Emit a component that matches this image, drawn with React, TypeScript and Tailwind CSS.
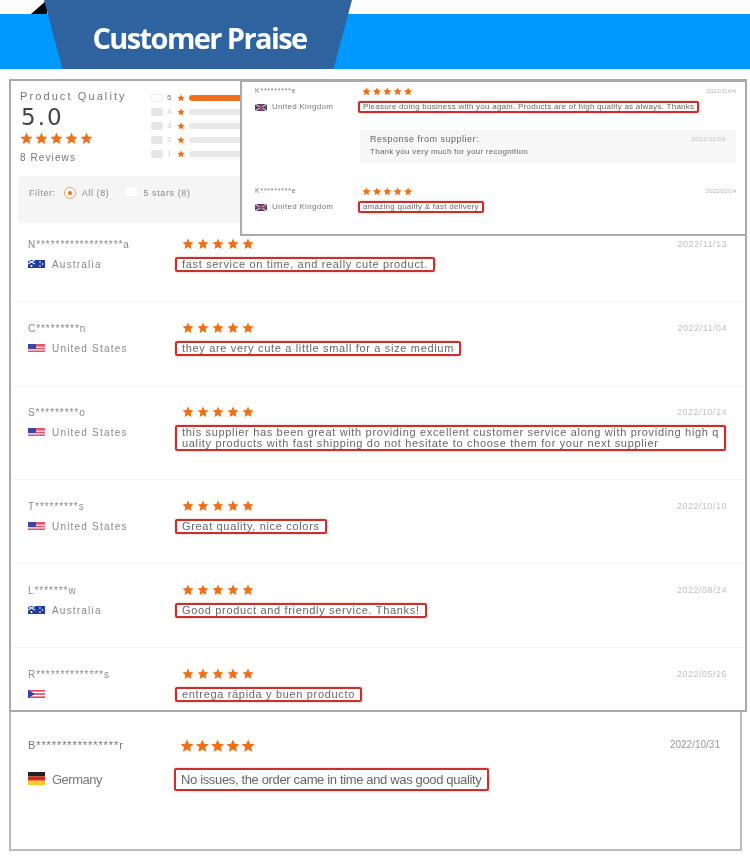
const reviews = [
  { name: 'N******************a', country: 'Australia', flag: 'au', date: '2022/11/13', text: 'fast service on time, and really cute product.', h: 'mb-[20px] h-[64px]' },
  { name: 'C*********n', country: 'United States', flag: 'us', date: '2022/11/04', text: 'they are very cute a little small for a size medium', h: 'mb-[20px] h-[64px]' },
  { name: 'S*********o', country: 'United States', flag: 'us', date: '2022/10/24', text: 'this supplier has been great with providing excellent customer service along with providing high q\nuality products with fast shipping do not hesitate to choose them for your next supplier', h: 'mb-[20px] h-[74px]' },
  { name: 'T*********s', country: 'United States', flag: 'us', date: '2022/10/10', text: 'Great quality, nice colors', h: 'mb-[20px] h-[64px]' },
  { name: 'L*******w', country: 'Australia', flag: 'au', date: '2022/08/24', text: 'Good product and friendly service. Thanks!', h: 'mb-[20px] h-[64px]' },
  { name: 'R**************s', country: '', flag: 'pr', date: '2022/05/26', text: 'entrega rápida y buen producto', h: 'h-[44px]' },
];

const bars = [
  { n: 5, fill: true },
  { n: 4, fill: false },
  { n: 3, fill: false },
  { n: 2, fill: false },
  { n: 1, fill: false },
];

function Stars({ size, pitch, count = 5 }: { size: number; pitch: number; count?: number }) {
  const stars = Array.from({ length: count }, (_, i) => i);
  return (
    <svg width={pitch * count} height={size} viewBox={`0 0 ${(pitch * count * 24) / size} 24`} className="block shrink-0">
      {stars.map((i) => (
        <path
          key={i}
          transform={`translate(${(i * pitch * 24) / size} 0)`}
          fill="#ef7018"
          d="M12 1l3.2 7.2 7.8.8-5.8 5.2 1.7 7.8L12 18l-6.9 4 1.7-7.8L1 9l7.8-.8z"
        />
      ))}
    </svg>
  );
}

function Flag({ kind, className }: { kind: string; className: string }) {
  if (kind === 'de') {
    return (
      <svg viewBox="0 0 17 13" className={className}>
        <rect width="17" height="4.4" fill="#222" />
        <rect y="4.4" width="17" height="4.3" fill="#d8261c" />
        <rect y="8.7" width="17" height="4.3" fill="#fbc926" />
      </svg>
    );
  }
  if (kind === 'au') {
    return (
      <svg viewBox="0 0 17 8" className={className}>
        <rect width="17" height="8" fill="#1f3f9c" />
        <path d="M0 0l7 4M7 0L0 4" stroke="#e8e8f0" strokeWidth="1.2" />
        <circle cx="3.5" cy="6" r="1" fill="#fff" />
        <circle cx="12" cy="2" r=".8" fill="#fff" />
        <circle cx="14.5" cy="4" r=".8" fill="#fff" />
        <circle cx="12" cy="6" r=".8" fill="#fff" />
      </svg>
    );
  }
  if (kind === 'uk') {
    return (
      <svg viewBox="0 0 12 7" className={className}>
        <rect width="12" height="7" fill="#3b3f78" />
        <path d="M0 0l12 7M12 0L0 7" stroke="#d9c8d0" strokeWidth="1.2" />
        <path d="M6 0v7M0 3.5h12" stroke="#b5364a" strokeWidth="1.4" />
      </svg>
    );
  }
  if (kind === 'pr') {
    return (
      <svg viewBox="0 0 17 8" className={className}>
        <rect width="17" height="8" fill="#fff" />
        <rect width="17" height="1.6" fill="#e0455c" />
        <rect y="3.2" width="17" height="1.6" fill="#e0455c" />
        <rect y="6.4" width="17" height="1.6" fill="#e0455c" />
        <path d="M0 0l7 4-7 4z" fill="#2d3fa8" />
      </svg>
    );
  }
  return (
    <svg viewBox="0 0 17 8" className={className}>
      <rect width="17" height="8" fill="#e0586c" />
      <rect y="2.6" width="17" height="1.3" fill="#f3e4e8" />
      <rect y="5.2" width="17" height="1.3" fill="#f3e4e8" />
      <rect width="8" height="5" fill="#3b46a0" />
    </svg>
  );
}

function Quote({ children, className }: { children: string; className: string }) {
  return (
    <div
      className={`whitespace-pre-line rounded-[2px] border-2 border-[#c9302c] text-[#666] shadow-[0_0_2px_rgba(200,50,40,0.5)] ${className}`}
    >
      {children}
    </div>
  );
}

function ReviewRow({ r }: { r: (typeof reviews)[number] }) {
  const separator = r.country ? 'border-b border-[#f6f6f6]' : '';
  return (
    <div className={`flex pl-[17px] pr-[18px] text-[10px] ${r.h} ${separator}`}>
      <div className="w-[147px] shrink-0 text-[#888]">
        <div className="h-[14px] pt-[1px] leading-[12px] tracking-[0.95px]">{r.name}</div>
        <div className="mt-[6px] flex h-[12px] items-center gap-[7px] tracking-[1.2px]">
          <Flag kind={r.flag} className="h-[8px] w-[17px] shrink-0" />
          {r.country}
        </div>
      </div>
      <div className="flex min-w-0 flex-1 flex-col items-start">
        <div className="flex h-[14px] w-full items-start justify-between pl-[7px]">
          <Stars size={12} pitch={15} />
          <span className="text-[9px] leading-[12px] tracking-[0.5px] text-[#c0c0c0]">{r.date}</span>
        </div>
        <Quote className="mt-[5px] px-[5px] text-[11px] leading-[11px] tracking-[0.67px]">{r.text}</Quote>
      </div>
    </div>
  );
}

function PopupRow({ date, quote }: { date: string; quote: string }) {
  return (
    <div className="flex justify-between">
      <div className="flex w-[116px] shrink-0 flex-col pl-[13px] text-[7px] text-[#777]">
        <div className="h-[12px] leading-[12px] tracking-[0.75px]">K*********e</div>
        <div className="mt-[4px] flex h-[12px] items-center gap-[5px] text-[8px] tracking-[0.3px]">
          <Flag kind="uk" className="h-[7px] w-[12px] shrink-0" />
          United Kingdom
        </div>
      </div>
      <div className="flex flex-1 flex-col items-start">
        <div className="h-[16px] pl-[4px] pt-[2px]">
          <Stars size={9} pitch={10.4} />
        </div>
        <Quote className="px-[3px] text-[8px] leading-[8px] tracking-[0.25px]">{quote}</Quote>
      </div>
      <div className="pr-[9px] pt-[1px] text-[6px] leading-[10px] text-[#b5b5b5]">{date}</div>
    </div>
  );
}

export default function App() {
  return (
    <div className="h-[861px] w-[750px] overflow-hidden bg-white font-['Liberation_Sans',Arial,sans-serif] blur-[0.4px]">
      <header className="relative h-[69px] pt-[14px]">
        <div className="h-[55px] bg-[#0099ff]" />
        <div className="absolute left-[31px] top-0 h-[14px] w-[16px] bg-black [clip-path:polygon(100%_0,100%_100%,0_100%)]" />
        <div className="absolute left-[44px] top-0 flex h-[69px] w-[308px] items-end justify-center bg-[#2f639f] pb-[12px] [clip-path:polygon(0_0,100%_0,94%_100%,6%_100%)]">
          <h1 className="ml-[3px] font-['Open_Sans',sans-serif] text-[29px] font-bold leading-[38px] tracking-[-1.6px] text-white">
            Customer Praise
          </h1>
        </div>
      </header>

      <main className="relative ml-[9px] mt-[10px] h-[633px] w-[738px] border-2 border-[#aaa] bg-white">
        <section className="px-[7px] pt-[9px]">
          <div className="flex h-[86px]">
            <div className="w-[133px] shrink-0 pl-[2px] text-[#777]">
              <div className="h-[14px] text-[11px] leading-[13px] tracking-[2.1px]">Product Quality</div>
              <div className="mt-[2px] pl-[1px] font-['DejaVu_Sans',sans-serif] text-[23px] leading-[22px] tracking-[2px] text-[#444]">5.0</div>
              <div className="mt-[4px]">
                <Stars size={13} pitch={15} />
              </div>
              <div className="mt-[7px] text-[10px] leading-[12px] tracking-[1.1px]">8 Reviews</div>
            </div>
            <div className="flex flex-1 flex-col gap-[4px] pt-[3px]">
              {bars.map((b) => (
                <div key={b.n} className="flex h-[10px] items-center">
                  <span className={`h-[8px] w-[12px] rounded-[2px] ${b.fill ? 'border border-[#eee] bg-white' : 'bg-[#e6e6e6]'}`} />
                  <span className={`ml-[4px] w-[10px] text-[8px] leading-[10px] ${b.fill ? 'text-[#777]' : 'text-[#ccc]'}`}>{b.n}</span>
                  <Stars size={8} pitch={8} count={1} />
                  <span className={`ml-[4px] h-[6px] w-[60px] rounded-l-full ${b.fill ? 'bg-[#ef7018]' : 'bg-[#e8e8e8]'}`} />
                </div>
              ))}
            </div>
          </div>
          <div className="flex h-[47px] items-start gap-[6px] rounded-[3px] bg-[#f5f5f5] pl-[11px] pt-[11px] text-[9px] leading-[12px] tracking-[0.6px] text-[#888]">
            <span>Filter:</span>
            <span className="ml-[2px] flex h-[12px] w-[12px] items-center justify-center rounded-full border border-[#f0a060] bg-white">
              <span className="h-[4px] w-[4px] rounded-full bg-[#ef7018]" />
            </span>
            <span>All (8)</span>
            <span className="ml-[11px] h-[9px] w-[11px] bg-white" />
            <span>5 stars (8)</span>
          </div>
        </section>

        <section className="mt-[15px]">
          {reviews.map((r) => (
            <ReviewRow key={r.name} r={r} />
          ))}
        </section>

        <aside className="absolute -right-[2px] -top-[1px] h-[156px] w-[507px] border-2 border-[#aaa] bg-white pt-[3px] text-[#666]">
          <PopupRow
            date="2022/11/04"
            quote="Pleasure doing business with you again. Products are of high quality as always. Thanks"
          />
          <div className="ml-[118px] mr-[9px] mt-[17px] h-[33px] bg-[#f7f7f7] px-[10px] pt-[3px]">
            <div className="flex justify-between text-[9px] leading-[12px] tracking-[0.5px]">
              <span>Response from supplier:</span>
              <span className="text-[6px] text-[#bbb]">2022/11/06</span>
            </div>
            <div className="mt-[2px] text-[8px] leading-[10px] tracking-[0.27px]">Thank you very much for your recognition</div>
          </div>
          <div className="mt-[22px]">
            <PopupRow date="2022/10/14" quote="amazing quality & fast delivery" />
          </div>
        </aside>
      </main>

      <section className="ml-[9px] flex h-[139px] w-[733px] border-x-2 border-b-2 border-[#bbb] pl-[17px] pt-[25px]">
        <div className="w-[146px] shrink-0 text-[#777]">
          <div className="h-[16px] text-[11px] leading-[16px] tracking-[0.9px]">B****************r</div>
          <div className="mt-[16px] flex h-[18px] items-center gap-[7px] text-[13px] tracking-[-0.5px]">
            <Flag kind="de" className="h-[13px] w-[17px] shrink-0" />
            <span className="mt-[4px]">Germany</span>
          </div>
        </div>
        <div className="flex flex-1 flex-col items-start">
          <div className="ml-[6px] mt-[2px]">
            <Stars size={14} pitch={15.3} />
          </div>
          <Quote className="mt-[15px] px-[5px] text-[13px] leading-[19px] tracking-[-0.35px] text-[#666]">
            No issues, the order came in time and was good quality
          </Quote>
        </div>
        <div className="pr-[20px] text-[10px] leading-[16px] text-[#999]">2022/10/31</div>
      </section>
    </div>
  );
}
